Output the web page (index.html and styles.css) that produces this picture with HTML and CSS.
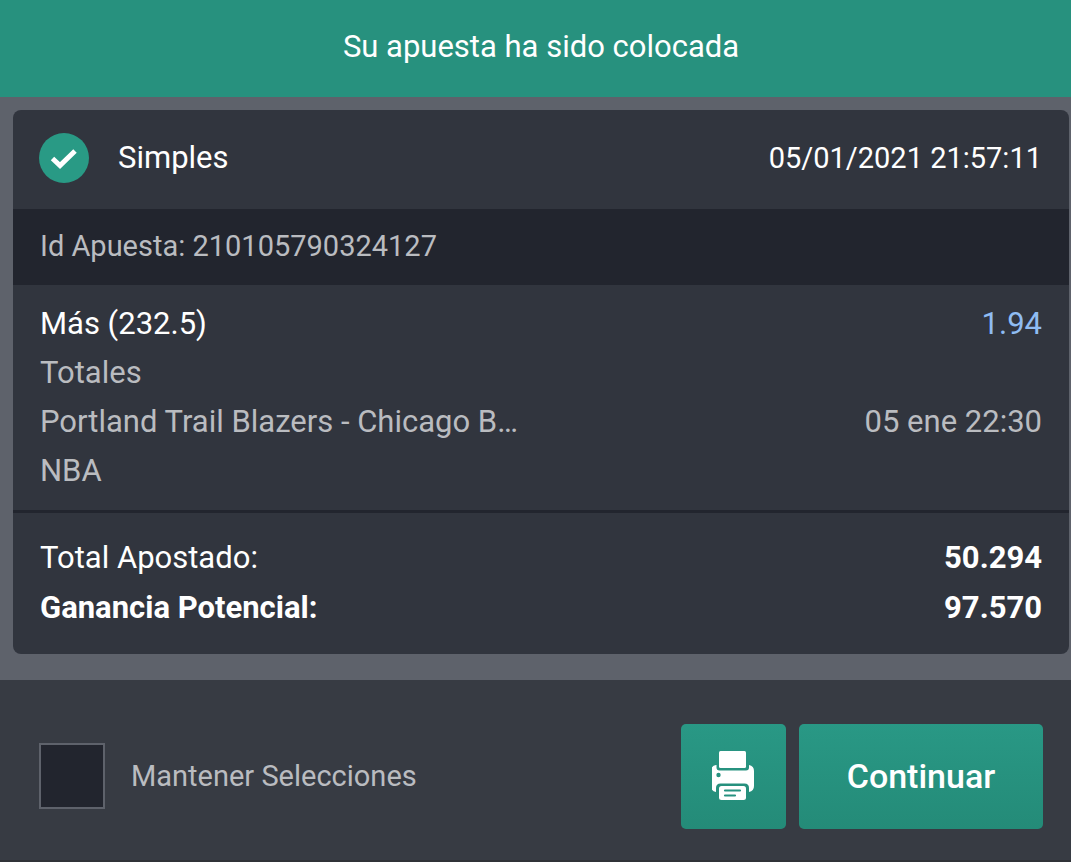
FILE: index.html
```html
<!DOCTYPE html>
<html lang="es">
<head>
    <meta charset="UTF-8">
    <meta name="viewport" content="width=device-width, initial-scale=1">
    <title>Su apuesta ha sido colocada</title>
    <link rel="stylesheet" href="styles.css">
</head>
<body>
    <header class="banner">
        <h1 class="banner-title">Su apuesta ha sido colocada</h1>
    </header>

    <main class="content">
        <section class="bet-card">
            <div class="bet-header">
                <svg class="check-icon" viewBox="0 0 50 50" aria-hidden="true">
                    <circle cx="25" cy="25" r="25" fill="#299a85"/>
                    <path d="M13.500 25.500l7.500 7L36 18" fill="none" stroke="#fff" stroke-width="5"/>
                </svg>
                <h2 class="bet-type">Simples</h2>
                <time class="bet-time" datetime="2021-01-05T21:57:11">05/01/2021 21:57:11</time>
            </div>

            <div class="bet-id">Id Apuesta: 210105790324127</div>

            <!-- Selección -->
            <div class="selection">
                <div class="row row-main">
                    <span>Más (232.5)</span>
                    <span class="odds">1.94</span>
                </div>
                <div class="row">Totales</div>
                <div class="row">
                    <span>Portland Trail Blazers - Chicago B…</span>
                    <time datetime="2021-01-05T22:30">05 ene 22:30</time>
                </div>
                <div class="row">NBA</div>
            </div>

            <!-- Totales -->
            <div class="totals">
                <div class="row">
                    <span>Total Apostado:</span>
                    <strong>50.294</strong>
                </div>
                <div class="row">
                    <strong>Ganancia Potencial:</strong>
                    <strong>97.570</strong>
                </div>
            </div>
        </section>
    </main>

    <footer class="actions">
        <input type="checkbox" id="keepSelections" class="keep-checkbox">
        <label for="keepSelections" class="keep-label">Mantener Selecciones</label>

        <button type="button" class="btn btn-print" aria-label="Imprimir">
            <svg class="print-icon" viewBox="0 0 44 50" aria-hidden="true">
                <rect x="7" y="0" width="27" height="17" rx="1.500" fill="#fff"/>
                <path d="M4.500 14v2.500q0 3 3 3h26.500q3 0 3-3V14q5 1 5 6v15q0 5-5 6v-4q0-4.500-4.500-4.500h-24q-4.500 0-4.500 4.500v4q-5-1-5-6V20q0-5 5-6z" fill="#fff"/>
                <circle cx="6.500" cy="24" r="2.200" fill="#279180"/>
                <rect x="7" y="35" width="27" height="14" rx="2.500" fill="#fff"/>
                <path d="M13 39.500h15M13 44.500h10" stroke="#279180" stroke-width="2.200" stroke-linecap="round"/>
            </svg>
        </button>
        <button type="button" class="btn btn-continue">Continuar</button>
    </footer>
</body>
</html>
```

FILE: styles.css
```css
:root {
    --green: #27917e;
    --green-light: #299885;
    --green-dark: #248b78;
    --page-bg: #5e626b;
    --card-bg: #31353e;
    --dark-bg: #22252e;
    --footer-bg: #373b43;
    --text-muted: #babcc0;
    --odds-color: #8fbcf2;
}

* {
    box-sizing: border-box;
}

body {
    display: flex;
    flex-direction: column;
    min-height: 100vh;
    margin: 0;
    font-family: Roboto, "Liberation Sans", sans-serif;
    font-size: 31px;
    color: #fff;
    background-color: var(--page-bg);
}

.banner {
    padding: 25px 0 28px 11px;
    background-color: var(--green);
    text-align: center;
}

.banner-title,
.bet-type {
    margin: 0;
    font-size: 31px;
    font-weight: 400;
    line-height: 44px;
}

.content {
    padding: 13px 2px 26px 13px;
}

.bet-card {
    overflow: hidden;
    border-radius: 8px;
    background-color: var(--card-bg);
}

.bet-header {
    display: flex;
    align-items: center;
    padding: 23px 27px 26px 26px;
}

.check-icon {
    width: 50px;
    height: 50px;
    margin-right: 29px;
}

.bet-time {
    margin-left: auto;
    font-size: 29px;
}

.bet-id {
    padding: 17px 27px 19px;
    font-size: 29px;
    line-height: 40px;
    color: var(--text-muted);
    background-color: var(--dark-bg);
}

.row {
    display: flex;
    justify-content: space-between;
}

.selection {
    padding: 14px 27px 15px;
    line-height: 49px;
    color: var(--text-muted);
}

.row-main {
    color: #fff;
}

.odds {
    color: var(--odds-color);
}

.totals {
    padding: 20px 27px 21px;
    border-top: 3px solid var(--dark-bg);
    line-height: 50px;
}

/* Barra inferior */
.actions {
    display: flex;
    flex: 1;
    align-items: center;
    padding: 12px 28px 0 39px;
    border-bottom: 2px solid #303338;
    background-color: var(--footer-bg);
}

.keep-checkbox {
    appearance: none;
    width: 66px;
    height: 66px;
    margin: 0;
    border: 2px solid var(--page-bg);
    background-color: var(--dark-bg);
    cursor: pointer;
}

.keep-checkbox:checked {
    background-color: var(--green);
}

.keep-label {
    margin-right: auto;
    padding-left: 26px;
    font-size: 29px;
    color: var(--text-muted);
}

.btn {
    display: flex;
    align-items: center;
    justify-content: center;
    height: 105px;
    padding: 0;
    border: none;
    border-radius: 5px;
    font-family: inherit;
    font-size: 34px;
    font-weight: 500;
    color: #fff;
    background: linear-gradient(var(--green-light), var(--green-dark));
    cursor: pointer;
}

.btn-print {
    width: 105px;
    margin-right: 13px;
}

.print-icon {
    width: 44px;
    height: 50px;
}

.btn-continue {
    width: 244px;
}
```
